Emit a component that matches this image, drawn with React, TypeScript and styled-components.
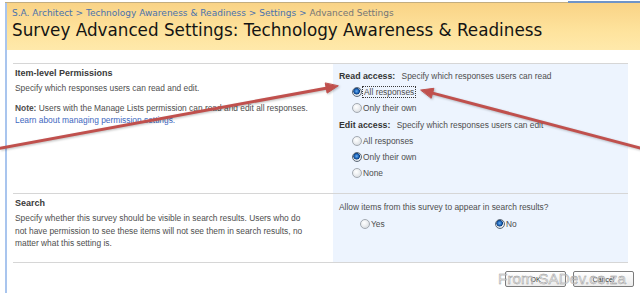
import React from 'react';
import styled, { createGlobalStyle } from 'styled-components';

const GlobalStyle = createGlobalStyle`
  html, body {
    margin: 0;
    padding: 0;
    background: #ffffff;
  }
  body {
    font-family: 'Liberation Sans', Arial, sans-serif;
    overflow: hidden;
  }
`;

const Page = styled.div`
  position: relative;
  width: 640px;
  height: 293px;
  overflow: hidden;
  background: #ffffff;
`;

const TopStrip = styled.div`
  display: flex;
  height: 3px;
`;

const TopEdge = styled.div<{ $blue?: boolean }>`
  flex: ${({ $blue }) => ($blue ? '0 0 72px' : '1')};
  border-top: 1px solid #ffffff;
  border-bottom: ${({ $blue }) => ($blue ? '2px solid #6f94c8' : '1px solid #c2ad80')};
  margin-left: ${({ $blue }) => ($blue ? '0' : '5px')};
`;

const Frame = styled.div`
  margin-left: 5px;
  height: 290px;
  border-left: 2px solid #a9c5ee;
`;

const Header = styled.div`
  height: 47px;
  padding: 4px 0 0 5px;
  box-sizing: border-box;
  background: linear-gradient(#f9d386, #fee39d 60%, #ffe9ab);
`;

const Breadcrumb = styled.div`
  font-family: 'DejaVu Sans', Verdana, sans-serif;
  font-size: 9px;
  line-height: 12px;
  color: #4a72ad;
  white-space: nowrap;
`;

const Crumb = styled.span<{ $current?: boolean }>`
  color: ${({ $current }) => ($current ? '#767676' : '#4a72ad')};
`;

const Title = styled.h1`
  margin: 1px 0 0;
  font-family: 'DejaVu Sans', Tahoma, sans-serif;
  font-weight: normal;
  font-size: 16.8px;
  line-height: 20px;
  color: #141414;
  white-space: nowrap;
`;

const Form = styled.div`
  margin: 13px 0 0 6px;
  width: 615px;
  border-bottom: 1px solid #d6d6d6;
`;

const Section = styled.div<{ $height: number }>`
  display: grid;
  grid-template-columns: 320px 295px;
  height: ${({ $height }) => $height}px;
  border-top: 1px solid #d6d6d6;
`;

const Info = styled.div`
  padding: 3px 8px 0 2px;
  font-size: 8.4px;
  line-height: 12.5px;
  color: #4e4e4e;
  white-space: nowrap;
`;

const InfoTitle = styled.div`
  font-weight: bold;
  font-size: 9px;
  line-height: 12px;
  color: #3a3a3a;
`;

const InfoText = styled.div<{ $gap: number }>`
  margin-top: ${({ $gap }) => $gap}px;
`;

const Link = styled.a`
  color: #3e68c0;
  text-decoration: none;
`;

const Controls = styled.div`
  background: #edf4fe;
  padding: 4px 0 0 6px;
  font-size: 8.4px;
  line-height: 16px;
  color: #4e4e4e;
`;

const FieldLabel = styled.div<{ $gap?: number }>`
  margin-top: ${({ $gap }) => $gap ?? 0}px;
  white-space: nowrap;
  b {
    color: #343434;
    font-size: 8.8px;
    margin-right: 4px;
  }
`;

const RadioLine = styled.label`
  display: flex;
  align-items: center;
  height: 16px;
  padding-left: 13px;
  gap: 1px;
`;

const RadioGrid = styled.div`
  display: grid;
  grid-template-columns: 135px auto;
  padding-left: 8px;
  margin-top: 1px;
`;

const RadioDot = styled.span<{ $on?: boolean }>`
  display: inline-block;
  box-sizing: border-box;
  width: 10px;
  height: 10px;
  border-radius: 50%;
  border: 1px solid ${({ $on }) => ($on ? '#5e6a78' : '#a3a9b1')};
  background: ${({ $on }) =>
    $on
      ? 'radial-gradient(circle at 45% 40%, #6fb0ee 0, #1f67bc 2px, #0c3d7c 3px, #e9ecef 3.6px, #c9ced4 100%)'
      : 'radial-gradient(circle at 40% 35%, #ffffff 0, #eef0f2 40%, #cfd3d8 100%)'};
`;

const Focused = styled.span`
  outline: 1px dotted #3a3a3a;
  outline-offset: 0;
  padding: 0 1px;
  line-height: 12px;
`;

const ButtonBar = styled.div`
  display: flex;
  justify-content: flex-end;
  gap: 7px;
  margin: 8px 6px 0 0;
`;

const Button = styled.button`
  width: 61px;
  height: 16px;
  padding: 0;
  border: 1px solid #7b7b7b;
  border-radius: 2px;
  background: linear-gradient(#ffffff, #ececec);
  font-family: 'Liberation Sans', Arial, sans-serif;
  font-size: 7px;
  color: #333;
`;

const Watermark = styled.div`
  position: absolute;
  left: 498px;
  top: 270px;
  font-family: 'Liberation Sans', Arial, sans-serif;
  font-size: 15.4px;
  line-height: 18px;
  color: rgba(220, 220, 220, 0.7);
  -webkit-text-stroke: 0.4px #949494;
  white-space: nowrap;
  pointer-events: none;
`;

const Overlay = styled.svg`
  position: absolute;
  left: 0;
  top: 0;
  pointer-events: none;
  filter: drop-shadow(1px 1px 1px rgba(0, 0, 0, 0.25));
`;

type RadioProps = { label: React.ReactNode; on?: boolean };

const Radio = ({ label, on }: RadioProps) => (
  <RadioLine>
    <RadioDot $on={on} />
    <span>{label}</span>
  </RadioLine>
);

const Arrows = () => (
  <Overlay width={640} height={293}>
    <g stroke="#c0504d" fill="#c0504d" strokeWidth={3} strokeLinecap="round">
      <line x1={-4} x2={326} y1={149} y2={88.2} />
      <polygon strokeWidth={1} points="338,86 327.1,93.1 325.3,83.3" />
      <line x1={644} x2={432.6} y1={149} y2={93.1} />
      <polygon strokeWidth={1} points="421,90 433.9,88.3 431.3,97.9" />
    </g>
  </Overlay>
);

const App = (): React.ReactElement => (
  <Page>
    <GlobalStyle />
    <TopStrip>
      <TopEdge />
      <TopEdge $blue />
    </TopStrip>
    <Frame>
      <Header>
        <Breadcrumb>
          <Crumb>S.A. Architect</Crumb> &gt; <Crumb>Technology Awareness &amp; Readiness</Crumb> &gt;{' '}
          <Crumb>Settings</Crumb> &gt; <Crumb $current>Advanced Settings</Crumb>
        </Breadcrumb>
        <Title>Survey Advanced Settings: Technology Awareness &amp; Readiness</Title>
      </Header>

      <Form>
        <Section $height={129}>
          <Info>
            <InfoTitle>Item-level Permissions</InfoTitle>
            <InfoText $gap={3}>Specify which responses users can read and edit.</InfoText>
            <InfoText $gap={7}>
              <b>Note:</b> Users with the Manage Lists permission can read and edit all responses.
              <br />
              <Link href="#">Learn about managing permission settings.</Link>
            </InfoText>
          </Info>
          <Controls>
            <FieldLabel>
              <b>Read access:</b> Specify which responses users can read
            </FieldLabel>
            <Radio on label={<Focused>All responses</Focused>} />
            <Radio label="Only their own" />
            <FieldLabel $gap={1}>
              <b>Edit access:</b> Specify which responses users can edit
            </FieldLabel>
            <Radio label="All responses" />
            <Radio on label="Only their own" />
            <Radio label="None" />
          </Controls>
        </Section>

        <Section $height={68}>
          <Info>
            <InfoTitle>Search</InfoTitle>
            <InfoText $gap={3}>
              Specify whether this survey should be visible in search results. Users who do
              <br />
              not have permission to see these items will not see them in search results, no
              <br />
              matter what this setting is.
            </InfoText>
          </Info>
          <Controls>
            <FieldLabel $gap={1}>Allow items from this survey to appear in search results?</FieldLabel>
            <RadioGrid>
              <Radio label="Yes" />
              <Radio on label="No" />
            </RadioGrid>
          </Controls>
        </Section>
      </Form>

      <ButtonBar>
        <Button>OK</Button>
        <Button>Cancel</Button>
      </ButtonBar>
    </Frame>
    <Watermark>From SADev.co.za</Watermark>
    <Arrows />
  </Page>
);

export default App;
